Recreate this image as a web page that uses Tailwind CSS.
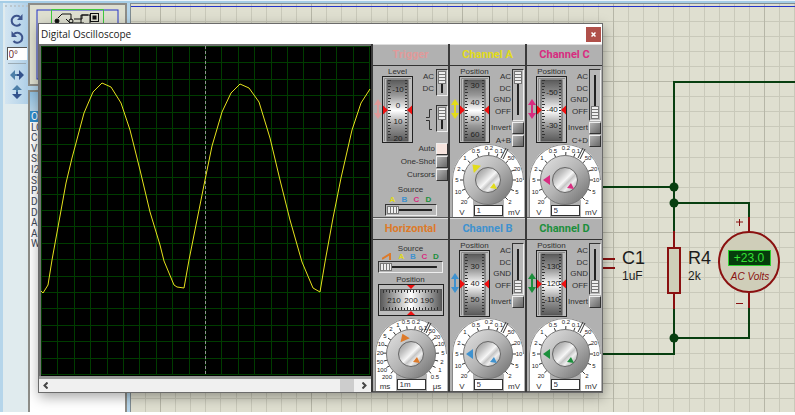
<!DOCTYPE html>
<html lang="en">
<head>
  <meta charset="UTF-8" />
  <meta name="viewport" content="width=device-width, initial-scale=1" />
  <title>Digital Oscilloscope</title>
  <script src="https://cdn.jsdelivr.net/npm/@tailwindcss/browser@4"></script>
</head>
<body class="relative min-h-screen flex flex-col overflow-hidden bg-white pb-[3px] font-['Liberation_Sans',sans-serif] text-[#303030]">

  <div class="h-[3px] shrink-0 border-t border-[#eaf3f8] bg-[#a5cde6]"></div>

  <main class="flex flex-1 bg-[#b5d5ea]">

    <!-- Rotate / mirror toolbar -->
    <aside class="ml-[3px] w-[25px] shrink-0 bg-[#e0ebee]">
      <div class="ml-[2px] flex h-[101px] flex-col items-center bg-linear-to-r from-[#d3e5f1] to-[#b0d0e8] pt-[2px]">
        <div class="mb-[5px] w-full border-t-2 border-dotted border-[#b9c6ce]"></div>
        <button aria-label="Rotate clockwise" class="h-[15px]">
          <svg width="14" height="14" viewBox="0 0 14 14" fill="none" stroke="#3d548c" stroke-width="2"><path d="M10.500 11A5 5 0 1 1 10 4"/><path d="M12.500 1v6H7z" fill="#3d548c" stroke="none"/></svg>
        </button>
        <button aria-label="Rotate anticlockwise" class="mt-[2px] h-[15px]">
          <svg width="14" height="14" viewBox="0 0 14 14" fill="none" stroke="#3d548c" stroke-width="2"><path d="M3.500 11A5 5 0 1 0 4 4"/><path d="M1.500 1v6H7z" fill="#3d548c" stroke="none"/></svg>
        </button>
        <input aria-label="Angle" value="0°" class="mt-[3px] h-[13px] w-[20px] border-l border-t border-[#555] bg-white px-px text-[10px] text-[#703030]" />
        <div class="mt-[3px] w-[18px] border-t border-[#9aaab4]"></div>
        <button aria-label="Mirror horizontally" class="mt-[4px] h-[14px]">
          <svg width="14" height="12" viewBox="0 0 14 12"><path d="M0 6l5-5v4h2v2H5v4z" fill="#4d7fa8"/><path d="M14 6L9 1v4H7v2h2v4z" fill="#33528c"/></svg>
        </button>
        <button aria-label="Mirror vertically" class="mt-[3px] h-[14px]">
          <svg width="12" height="14" viewBox="0 0 12 14"><path d="M6 0l5 5H7v2H5V5H1z" fill="#4d7fa8"/><path d="M6 14l5-5H7V7H5v2H1z" fill="#33528c"/></svg>
        </button>
      </div>
    </aside>

    <!-- Overview and instrument list -->
    <section class="mr-[3px] flex w-[99px] shrink-0 flex-col gap-[4px]">
      <div class="h-[83px] border-2 border-[#8d8d88] bg-[#dedfd0] px-[6px] pt-[4px]">
        <svg width="83" height="71" fill="none">
          <rect x="1" y="1" width="81" height="69" stroke="#2434c8" stroke-width="1"/>
          <path d="M15.500 30V.5h52V30" stroke="#3fc83f"/>
          <g stroke="#111" stroke-width="1">
            <path d="M22 9l4-4h9v6M30 10l4 4h14M38 10h8V6h8v8M45 14V6h7"/>
            <circle cx="35" cy="12" r="2"/>
            <circle cx="21" cy="12" r="2" fill="#111"/>
            <rect x="54.500" y="4.500" width="8" height="8"/>
            <rect x="57" y="7" width="3" height="3" fill="#111"/>
          </g>
        </svg>
      </div>
      <div class="flex flex-1 flex-col border-l-2 border-r-2 border-t-2 border-[#8d8d88] bg-white">
        <div class="h-[19px] bg-linear-to-br from-[#8fbfe0] to-[#dbeaf3]"></div>
        <ul id="instruments" class="grid h-[138px] auto-rows-fr bg-white font-['Roboto',sans-serif] text-[10px] leading-[11px] text-[#404858]"></ul>
      </div>
    </section>

    <!-- Schematic sheet -->
    <section class="min-w-0 flex-1 border-l border-t border-[#7f8c92] bg-[#dfdfd0]">
      <svg class="block h-full w-full font-['Liberation_Sans',sans-serif]">
        <defs>
          <pattern id="sheet" width="151" height="151" x="29" y="77" patternUnits="userSpaceOnUse">
            <path d="M15.500 0v151M30.500 0v151M45.500 0v151M60.500 0v151M76.500 0v151M91.500 0v151M106.500 0v151M121.500 0v151M136.500 0v151M0 15.500h151M0 30.500h151M0 45.500h151M0 60.500h151M0 76.500h151M0 91.500h151M0 106.500h151M0 121.500h151M0 136.500h151" stroke="#c9c9ba"/>
            <path d="M.5 0v151M0 .5h151" stroke="#b6b6a7"/>
          </pattern>
        </defs>
        <rect width="100%" height="100%" fill="url(#sheet)"/>
        <path d="M0 2.500h2000" stroke="#2434c8"/>
        <g fill="none" stroke-width="2">
          <path d="M543 227V78H2000M440 183h103M543 199h75v14M543 305v45H440M543 334h75v-30" stroke="#083f10"/>
          <path d="M543 227v16M543 290v15M618 213v15M618 289v15M470 255h14M470 264h14" stroke="#8a1010"/>
          <rect x="537" y="244" width="12" height="45" fill="#cfceb9" stroke="#8a1010"/>
          <circle cx="618" cy="258" r="30" fill="#cfceb9" stroke="#8a1010"/>
        </g>
        <g fill="#083f10">
          <circle cx="543" cy="183" r="4.500"/><circle cx="543" cy="199" r="4.500"/><circle cx="543" cy="334" r="4.500"/>
        </g>
        <path d="M605 218h7M608.500 215v7M605 299.500h7" stroke="#8a1010"/>
        <rect x="597.500" y="246.500" width="42" height="15" fill="#063c0c" stroke="#2fd02f"/>
        <text x="618" y="258" text-anchor="middle" font-size="12" fill="#34e034">+23.0</text>
        <text x="619" y="276" text-anchor="middle" font-size="10" font-style="italic" fill="#8a1010">AC Volts</text>
        <g fill="#1c1c1c">
          <text x="491" y="260" font-size="18">C1</text>
          <text x="491" y="276" font-size="12">1uF</text>
          <text x="557" y="260" font-size="18">R4</text>
          <text x="557" y="276" font-size="12">2k</text>
        </g>
      </svg>
    </section>
  </main>

  <!-- Oscilloscope window -->
  <div role="dialog" aria-labelledby="title" class="absolute left-[38px] top-[23px] w-[565px] border border-[#6b6b6b] bg-white shadow-[1px_4px_12px_rgba(0,0,0,0.35)]">
    <header class="flex h-[20px] items-center justify-between pl-[2px]">
      <h1 id="title" class="font-['Open_Sans',sans-serif] text-[10px] text-[#222]">Digital Oscilloscope</h1>
      <button aria-label="Close" class="mr-px flex h-[15px] w-[15px] items-center justify-center bg-[#b0504a]">
        <svg width="5" height="5" stroke="#fff" stroke-width="1.500"><path d="M.5 .5l4 4M4.500 .5l-4 4"/></svg>
      </button>
    </header>

    <div class="flex">
      <!-- Display -->
      <div class="flex min-w-0 flex-1 flex-col bg-[#9b9b9b]">
        <div class="flex-1 border-l-2 border-t-2 border-[#707070]">
          <svg class="block h-[330px] w-full bg-black" viewBox="0 0 330 330" preserveAspectRatio="none" fill="none">
            <defs>
              <pattern id="graticule" width="82" height="82" patternUnits="userSpaceOnUse">
                <path d="M.5 0v82M16.500 0v82M33.500 0v82M49.500 0v82M66.500 0v82M0 .5h82M0 16.500h82M0 33.500h82M0 49.500h82M0 66.500h82" stroke="#003c00"/>
              </pattern>
            </defs>
            <rect width="329" height="329" fill="url(#graticule)"/>
            <path d="M164.500 0v330" stroke="#909090" stroke-dasharray="3 2"/>
            <polyline id="trace" stroke="#e6e21c" stroke-width="1"/>
          </svg>
        </div>
        <div class="mt-[3px] flex h-[13px] items-center justify-between bg-[#f0f0f0] px-[4px]">
          <button aria-label="Scroll left"><svg width="5" height="7" fill="none" stroke="#444" stroke-width="2"><path d="M4.500 .5l-3 3 3 3"/></svg></button>
          <div class="ml-auto mr-[8px] h-full w-[14px] bg-[#cdcdcd]"></div>
          <button aria-label="Scroll right"><svg width="5" height="7" fill="none" stroke="#444" stroke-width="2"><path d="M.5 .5l3 3-3 3"/></svg></button>
        </div>
      </div>

      <!-- Controls -->
      <div id="controls" class="grid w-[231px] shrink-0 grid-cols-3 bg-[#b1b1b1]"></div>
    </div>
  </div>

  <svg width="0" height="0" class="absolute">
    <defs>
      <linearGradient id="drumV" x2="0" y2="1"><stop offset="0" stop-color="#5a5a5a"/><stop offset=".25" stop-color="#989898"/><stop offset=".5" stop-color="#fff"/><stop offset=".75" stop-color="#989898"/><stop offset="1" stop-color="#5a5a5a"/></linearGradient>
      <linearGradient id="drumH"><stop offset="0" stop-color="#5a5a5a"/><stop offset=".25" stop-color="#acacac"/><stop offset=".5" stop-color="#fff"/><stop offset=".75" stop-color="#acacac"/><stop offset="1" stop-color="#5a5a5a"/></linearGradient>
      <linearGradient id="knob" x2="1" y2="1"><stop offset="0" stop-color="#e4e4e4"/><stop offset=".5" stop-color="#b4b4b4"/><stop offset="1" stop-color="#6a6a6a"/></linearGradient>
      <linearGradient id="cap" x2="1" y2="1"><stop offset="0" stop-color="#8a8a8a"/><stop offset=".3" stop-color="#c4c4c4"/><stop offset=".5" stop-color="#f6f6f6"/><stop offset=".6" stop-color="#c6c6c6"/><stop offset=".7" stop-color="#eee"/><stop offset="1" stop-color="#8a8a8a"/></linearGradient>
    </defs>
  </svg>

  <script>
    const COLORS = { A: '#e2dc1a', B: '#3f92cf', C: '#d82c80', D: '#1c8f3c', ramp: '#dd7a2a' };

    // Instrument list, mostly hidden behind the window
    document.getElementById('instruments').innerHTML =
      ['OSCILLOSCOPE', 'LOGIC ANALYSER', 'COUNTER TIMER', 'VIRTUAL TERMINAL', 'SPI DEBUGGER', 'I2C DEBUGGER', 'SIGNAL GENERATOR',
       'PATTERN GENERATOR', 'DC VOLTMETER', 'DC AMMETER', 'AC VOLTMETER', 'AC AMMETER', 'WATTMETER']
        .map((name, i) => `<li class="overflow-hidden pl-px ${i === 0 ? 'bg-[#2f8ccc] text-white' : ''}">${name.slice(0, 2)}</li>`).join('');

    // Trace, in display units
    document.getElementById('trace').setAttribute('points',
      '0,245 2,247 7,239 11,214 17,181 25,137 31,112 43,67 52,46 61,37 70,41 80,57 89,84 99,124 109,166 119,199 123,215 133,239 136,241 143,242 148,214 156,174 164,134 171,100 181,66 190,47 199,38 208,42 218,56 229,92 239,134 249,174 261,216 272,242 279,246 284,216 292,172 300,132 311,84 320,57 329,43');

    const THUMB_V = "[&::-webkit-slider-thumb]:appearance-none [&::-webkit-slider-thumb]:h-[13px] [&::-webkit-slider-thumb]:w-[8px] [&::-webkit-slider-thumb]:border [&::-webkit-slider-thumb]:border-[#777] [&::-webkit-slider-thumb]:bg-[repeating-linear-gradient(#eee_0_2px,#777_2px_3px)]";
    const THUMB_H = "[&::-webkit-slider-thumb]:appearance-none [&::-webkit-slider-thumb]:h-[8px] [&::-webkit-slider-thumb]:w-[12px] [&::-webkit-slider-thumb]:border [&::-webkit-slider-thumb]:border-[#777] [&::-webkit-slider-thumb]:bg-[repeating-linear-gradient(90deg,#eee_0_2px,#777_2px_3px)]";

    const slideV = (name, max, value, size) => `
      <input type="range" aria-label="${name}" min="0" max="${max}" value="${value}"
             class="block w-[12px] ${size} appearance-none border border-[#333] border-b-[#eee] border-r-[#eee] bg-[#b8b8b8] bg-[linear-gradient(#222,#222)] bg-[length:2px_80%] bg-center bg-no-repeat p-px [writing-mode:vertical-lr] ${THUMB_V}" />`;

    const slideH = (name, max, size) => `
      <input type="range" aria-label="${name}" min="0" max="${max}" value="0"
             class="mx-auto block h-[12px] ${size} appearance-none border border-[#333] border-b-[#eee] border-r-[#eee] bg-[#b8b8b8] bg-[linear-gradient(#222,#222)] bg-[length:84%_2px] bg-center bg-no-repeat p-px ${THUMB_H}" />`;

    const push = (id, label, lit) => `
      <div class="flex items-center justify-end gap-px">
        <label for="${id}" class="text-[8px] leading-[12px] whitespace-nowrap">${label}</label>
        <button id="${id}" class="h-[12px] w-[12px] border border-[#eee] border-b-[#333] border-r-[#333] ${lit ? 'bg-[#f6e4de]' : 'bg-linear-to-br from-[#b4b4b4] to-[#686868]'}"></button>
      </div>`;

    const arrow = (color) => `
      <svg width="8" height="20" class="mt-[33px] shrink-0" fill="${color}"><path d="M4 0l4 6H5v8h3l-4 6-4-6h3V6H0z"/></svg>`;

    // Vertical thumbwheel; marks are [text, offset from the centre line]
    function drum(label, marks) {
      let ticks = '';
      for (let y = 4; y < 64; y += 3) ticks += `M6 ${y}.5h${y % 2 ? 2 : 3}M25 ${y}.5h-2`;
      return `
        <div class="w-[31px] shrink-0 pt-px">
          <p class="h-[9px] text-center text-[8px] leading-[10px]">${label}</p>
          <svg width="31" height="67" class="block overflow-hidden">
            <rect x=".5" y=".5" width="30" height="66" fill="#bdbdbd" stroke="#222"/>
            <path d="M2.500 65V2.500H29" stroke="#8a8a8a" fill="none"/>
            <rect x="5" y="4" width="21" height="61" fill="url(#drumV)" stroke="#555" stroke-width="1"/>
            <path d="${ticks}" stroke="#333"/>
            <path d="M1 29.500v9l5-4.500zM30 29.500v9l-5-4.500z" fill="#f01010"/>
            ${marks.map(([t, dy]) => `<text x="16" y="${36 + dy}" font-size="8" text-anchor="middle" fill="#222">${t}</text>`).join('')}
          </svg>
        </div>`;
    }

    // Rotary knob with its scale printed on a white arch
    function dial({ scale, left, right, value, color, turn }) {
      const ticks = scale.map(([, x, y]) => {
        const a = Math.atan2(y - 36, x - 36);
        const p = (r) => `${(36 + r * Math.cos(a)).toFixed(1)} ${(36 + r * Math.sin(a)).toFixed(1)}`;
        return `M${p(24)}L${p(28)}`;
      }).join('');
      return `
        <div class="relative ml-[2px] h-[73px] w-[72px]">
          <svg width="72" height="73" class="block">
            <path d="M0 73V36a36 36 0 0 1 72 0v37z" fill="#fff"/>
            <path d="M.5 73V36a35.500 35.500 0 0 1 71 0" fill="none" stroke="#888"/>
            <path d="M21 56h31v17H21z" fill="#b1b1b1"/>
            <path d="${ticks}" stroke="#333"/>
            <path d="M49 14l5-10M51 15l5-10" stroke="#333"/>
            <circle cx="36" cy="36" r="24.500" fill="url(#knob)" stroke="#777"/>
            <circle cx="36" cy="36" r="12.500" fill="url(#cap)" stroke="#666"/>
            <path d="M14 36l7-5v10z" fill="${color}" transform="rotate(${turn} 36 36)"/>
            <path d="M42 39l3 6-7-1z" fill="${color}"/>
            ${scale.map(([t, x, y]) => `<text x="${x}" y="${y + 2}" font-size="6" text-anchor="middle" fill="#222">${t}</text>`).join('')}
          </svg>
          <div class="absolute inset-x-0 bottom-0 flex h-[12px] items-end justify-between">
            <span class="w-[20px] text-center text-[8px] leading-[9px]">${left}</span>
            <input aria-label="Scale" value="${value}" class="mb-px h-[11px] w-[29px] border border-[#333] bg-white px-[2px] text-[8px] text-[#334]" />
            <span class="w-[20px] text-center text-[8px] leading-[9px]">${right}</span>
          </div>
        </div>`;
    }

    const VOLTS = [['20', 12, 58], ['10', 6, 48], ['5', 5, 36], ['2', 7, 25], ['1', 13, 14], ['0.5', 24, 7], ['0.2', 37, 4], ['0.1', 47, 7],
      ['50', 59, 14], ['20', 65, 25], ['10', 67, 36], ['5', 65, 48], ['2', 58, 58]];
    const TIME = [['200', 12, 59], ['100', 7, 52], ['50', 5, 44], ['20', 5, 35], ['10', 6, 26], ['5', 10, 18], ['2', 16, 11], ['1', 23, 7],
      ['0.5', 31, 4], ['0.2', 41, 4], ['0.1', 48, 10], ['50', 57, 13], ['20', 62, 19], ['10', 66, 26], ['5', 68, 35], ['2', 67, 44], ['1', 65, 52], ['0.5', 60, 59]];

    const panel = (title, color, body) => `
      <section class="border-l-2 border-[#3a3a3a]">
        <h2 class="flex h-[22px] items-center justify-center border-b border-t border-b-[#333] border-t-[#ddd] font-['Roboto',sans-serif] text-[11px] font-bold" style="color: ${color}">${title}</h2>
        <div class="h-[152px] border-b border-[#555]">${body}</div>
      </section>`;

    function channel({ name, marks, coupling, extra, value, turn }) {
      const color = COLORS[name];
      return panel(`Channel ${name}`, color, `
        <div class="flex h-[78px] pl-px">
          ${arrow(color)}
          ${drum('Position', marks)}
          <div class="relative ml-auto mr-px flex flex-col gap-px pt-[3px]">
            <div class="flex justify-end gap-px">
              <div class="mt-[2px] grid h-[46px] auto-rows-fr items-center text-right text-[8px] leading-[11px]"><span>AC</span><span>DC</span><span>GND</span><span>OFF</span></div>
              ${slideV(`Channel ${name} coupling`, 3, coupling, 'h-[52px]')}
            </div>
            ${push(`invert-${name}`, 'Invert')}
            ${extra ? push(`sum-${name}`, extra) : ''}
          </div>
        </div>
        ${dial({ scale: VOLTS, left: 'V', right: 'mV', value, color, turn })}`);
    }

    const sources = (ramp) => `
      ${ramp ? `<svg width="11" height="7" fill="none" stroke="${COLORS.ramp}" stroke-width="2"><path d="M0 6l8-5v6"/></svg>` : ''}
      ${['A', 'B', 'C', 'D'].map((c) => `<span class="w-[6px] text-center" style="color: ${COLORS[c]}">${c}</span>`).join('')}`;

    const trigger = panel('Trigger', '#e09a9a', `
      <div class="flex h-[77px] pl-px">
        ${arrow('#e09a9a')}
        ${drum('Level', [['-10', -20], ['0', -4], ['10', 12], ['20', 29]])}
        <div class="ml-auto flex flex-col gap-[9px] pt-[3px]">
          <div class="flex justify-end gap-[2px]">
            <div class="mt-[2px] text-right text-[8px] leading-[12px]"><p>AC</p><p>DC</p></div>
            ${slideV('Trigger coupling', 1, 0, 'h-[27px]')}
          </div>
          <div class="flex justify-end gap-[4px]">
            <svg width="6" height="27" fill="none" stroke="#333"><path d="M0 12.500h3.500v-8H6M0 15.500h3.500v9H6"/></svg>
            ${slideV('Trigger edge', 1, 0, 'h-[27px]')}
          </div>
        </div>
      </div>
      <div class="flex flex-col gap-px">
        ${push('auto', 'Auto', true)}
        ${push('one-shot', 'One-Shot')}
        ${push('cursors', 'Cursors')}
      </div>
      <p class="mt-[4px] text-center text-[8px] leading-[10px]">Source</p>
      <div class="mx-auto flex w-[42px] justify-between text-[8px] leading-[9px] font-bold">${sources(false)}</div>
      ${slideH('Trigger source', 3, 'w-[52px]')}`);

    let rowTicks = '';
    for (let x = 5; x < 62; x += 3) rowTicks += `M${x}.5 6v${x % 2 ? 3 : 2}M${x}.5 26v-${x % 2 ? 3 : 2}`;

    const horizontal = panel('Horizontal', COLORS.ramp, `
      <p class="pt-[4px] text-center text-[8px] leading-[9px]">Source</p>
      <div class="mx-auto flex w-[57px] justify-between text-[8px] leading-[8px] font-bold">${sources(true)}</div>
      ${slideH('Horizontal source', 4, 'w-[65px]')}
      <p class="pt-[2px] text-center text-[8px] leading-[9px]">Position</p>
      <svg width="66" height="32" class="mx-auto mb-[2px] block">
        <rect x=".5" y=".5" width="65" height="31" fill="#bdbdbd" stroke="#222"/>
        <rect x="2.500" y="5.500" width="61" height="21" fill="url(#drumH)" stroke="#555"/>
        <path d="${rowTicks}" stroke="#333"/>
        <path d="M29 1h8l-4 4zM29 31h8l-4-4z" fill="#f01010"/>
        <g font-size="8" text-anchor="middle" fill="#222"><text x="16" y="19">210</text><text x="33" y="19">200</text><text x="49" y="19">190</text></g>
      </svg>
      ${dial({ scale: TIME, left: 'ms', right: 'μs', value: '1m', color: COLORS.ramp, turn: 67 })}`);

    document.getElementById('controls').innerHTML =
      trigger +
      channel({ name: 'A', marks: [['30', -24], ['40', -7], ['50', 9], ['60', 25]], coupling: 0, extra: 'A+B', value: '1', turn: 45 }) +
      channel({ name: 'C', marks: [['-50', -17], ['-40', 0], ['-30', 16]], coupling: 3, extra: 'C+D', value: '5', turn: 0 }) +
      horizontal +
      channel({ name: 'B', marks: [['30', -17], ['40', 0], ['50', 16]], coupling: 3, value: '5', turn: 0 }) +
      channel({ name: 'D', marks: [['-130', -17], ['-120', 0], ['-110', 16]], coupling: 3, value: '5', turn: 0 });
  </script>

</body>
</html>
